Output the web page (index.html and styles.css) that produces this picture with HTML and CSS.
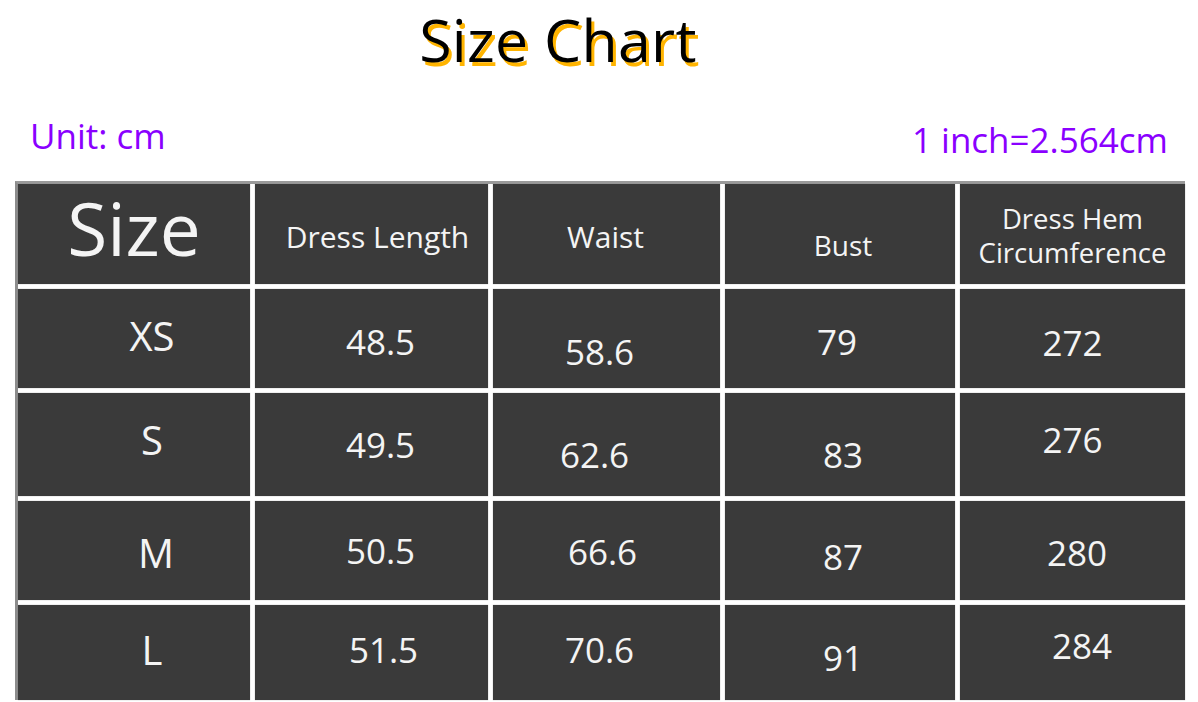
FILE: index.html
```html
<!DOCTYPE html>
<html>
<head>
<meta charset="utf-8">
<link rel="stylesheet" href="styles.css">
</head>
<body>
<div class="page">
  <h1 class="title">Size Chart</h1>
  <div class="units">
    <span class="unit-left">Unit: cm</span>
    <span class="unit-right">1 inch=2.564cm</span>
  </div>
  <div class="chart">
    <div class="cell head-size">Size</div>
    <div class="cell c2 head hw v-d4">Dress Length</div>
    <div class="cell c3 head hw v-d4">Waist</div>
    <div class="cell c4 head v-d22">Bust</div>
    <div class="cell c5 head two v-d4">Dress Hem<br>Circumference</div>

    <div class="cell c1 size v-u7">XS</div>
    <div class="cell c2 num v-d5">48.5</div>
    <div class="cell c3 num v-d25">58.6</div>
    <div class="cell c4 num px-0 v-d5">79</div>
    <div class="cell c5 num v-d7">272</div>

    <div class="cell c1 size v-u11">S</div>
    <div class="cell c2 num">49.5</div>
    <div class="cell c3 num px-l v-d19">62.6</div>
    <div class="cell c4 num v-d19">83</div>
    <div class="cell c5 num v-u11">276</div>

    <div class="cell c1 size px-m v-d3">M</div>
    <div class="cell c2 num">50.5</div>
    <div class="cell c3 num px-s v-d1">66.6</div>
    <div class="cell c4 num v-d11">87</div>
    <div class="cell c5 num px-r v-d3">280</div>

    <div class="cell c1 size v-u7">L</div>
    <div class="cell c2 num px-r v-u7">51.5</div>
    <div class="cell c3 num v-u7">70.6</div>
    <div class="cell c4 num v-d9">91</div>
    <div class="cell c5 num px-rr v-u15">284</div>
  </div>
</div>
</body>
</html>
```

FILE: styles.css
```css
* { box-sizing: border-box; }
html, body {
  margin: 0;
  padding: 0;
  background: #ffffff;
}
body {
  font-family: "Open Sans", "Noto Sans", sans-serif;
  width: 1198px;
  height: 702px;
  overflow: hidden;
}
.page {
  display: flex;
  flex-direction: column;
}
.title {
  margin: 0;
  padding: 1px 82px 0 0;
  height: 96px;
  font-size: 59px;
  line-height: 76px;
  font-weight: 400;
  color: #000;
  text-align: center;
  letter-spacing: 0.3px;
  text-shadow: 3px 4px 0 #ffb400;
}
.units {
  display: flex;
  justify-content: space-between;
  align-items: flex-start;
  height: 85px;
  padding: 0 30px 0 30px;
  color: #8a00ff;
  font-size: 35px;
  line-height: 40px;
}
.unit-left { margin-top: 20px; }
.unit-right { margin-top: 24px; }

.chart {
  margin-left: 15px;
  width: 1170px;
  display: grid;
  grid-template-columns: 232px 233px 227px 230px 225px;
  grid-template-rows: 100px 99px 103px 99px 95px;
  gap: 5px;
  background: #ffffff;
  border-left: 3px solid #8c8c8c;
  border-top: 3px solid #9a9a9a;
}
.cell {
  background: #3a3a3a;
  color: #f4f4f4;
  display: flex;
  align-items: center;
  justify-content: center;
  box-shadow: 0 0 1px 0 rgba(120,120,120,0.7);
}

/* horizontal placement per column */
.c1 { padding-left: 36px; }
.c1.px-m { padding-left: 44px; }
.c2 { padding-left: 18px; }
.c2.px-r { padding-left: 24px; }
.c2.head { padding-left: 12px; }
.c3 { padding-right: 14px; }
.c3.px-l { padding-right: 24px; }
.c3.px-s { padding-right: 8px; }
.c3.head { padding-right: 2px; }
.c4 { padding-left: 6px; }
.c4.px-0 { padding-left: 0; padding-right: 6px; }
.c5.px-r { padding-left: 9px; }
.c5.px-rr { padding-left: 19px; }

.head-size {
  padding-bottom: 14px;
  font-size: 73px;
  font-weight: 400;
}
.head {
  font-size: 28px;
  line-height: 33px;
}
.head.hw { font-size: 30px; }
.two {
  text-align: center;
  font-size: 27.5px;
  line-height: 34px;
}
.size { font-size: 40px; }
.num { font-size: 35px; }

/* vertical nudges */
.v-d1 { padding-top: 1px; }
.v-d3 { padding-top: 3px; }
.v-d4 { padding-top: 4px; }
.v-d5 { padding-top: 5px; }
.v-d7 { padding-top: 7px; }
.v-d9 { padding-top: 9px; }
.v-d11 { padding-top: 11px; }
.v-d19 { padding-top: 19px; }
.v-d22 { padding-top: 22px; }
.v-d25 { padding-top: 25px; }
.v-u7 { padding-bottom: 7px; }
.v-u11 { padding-bottom: 11px; }
.v-u15 { padding-bottom: 15px; }
```
